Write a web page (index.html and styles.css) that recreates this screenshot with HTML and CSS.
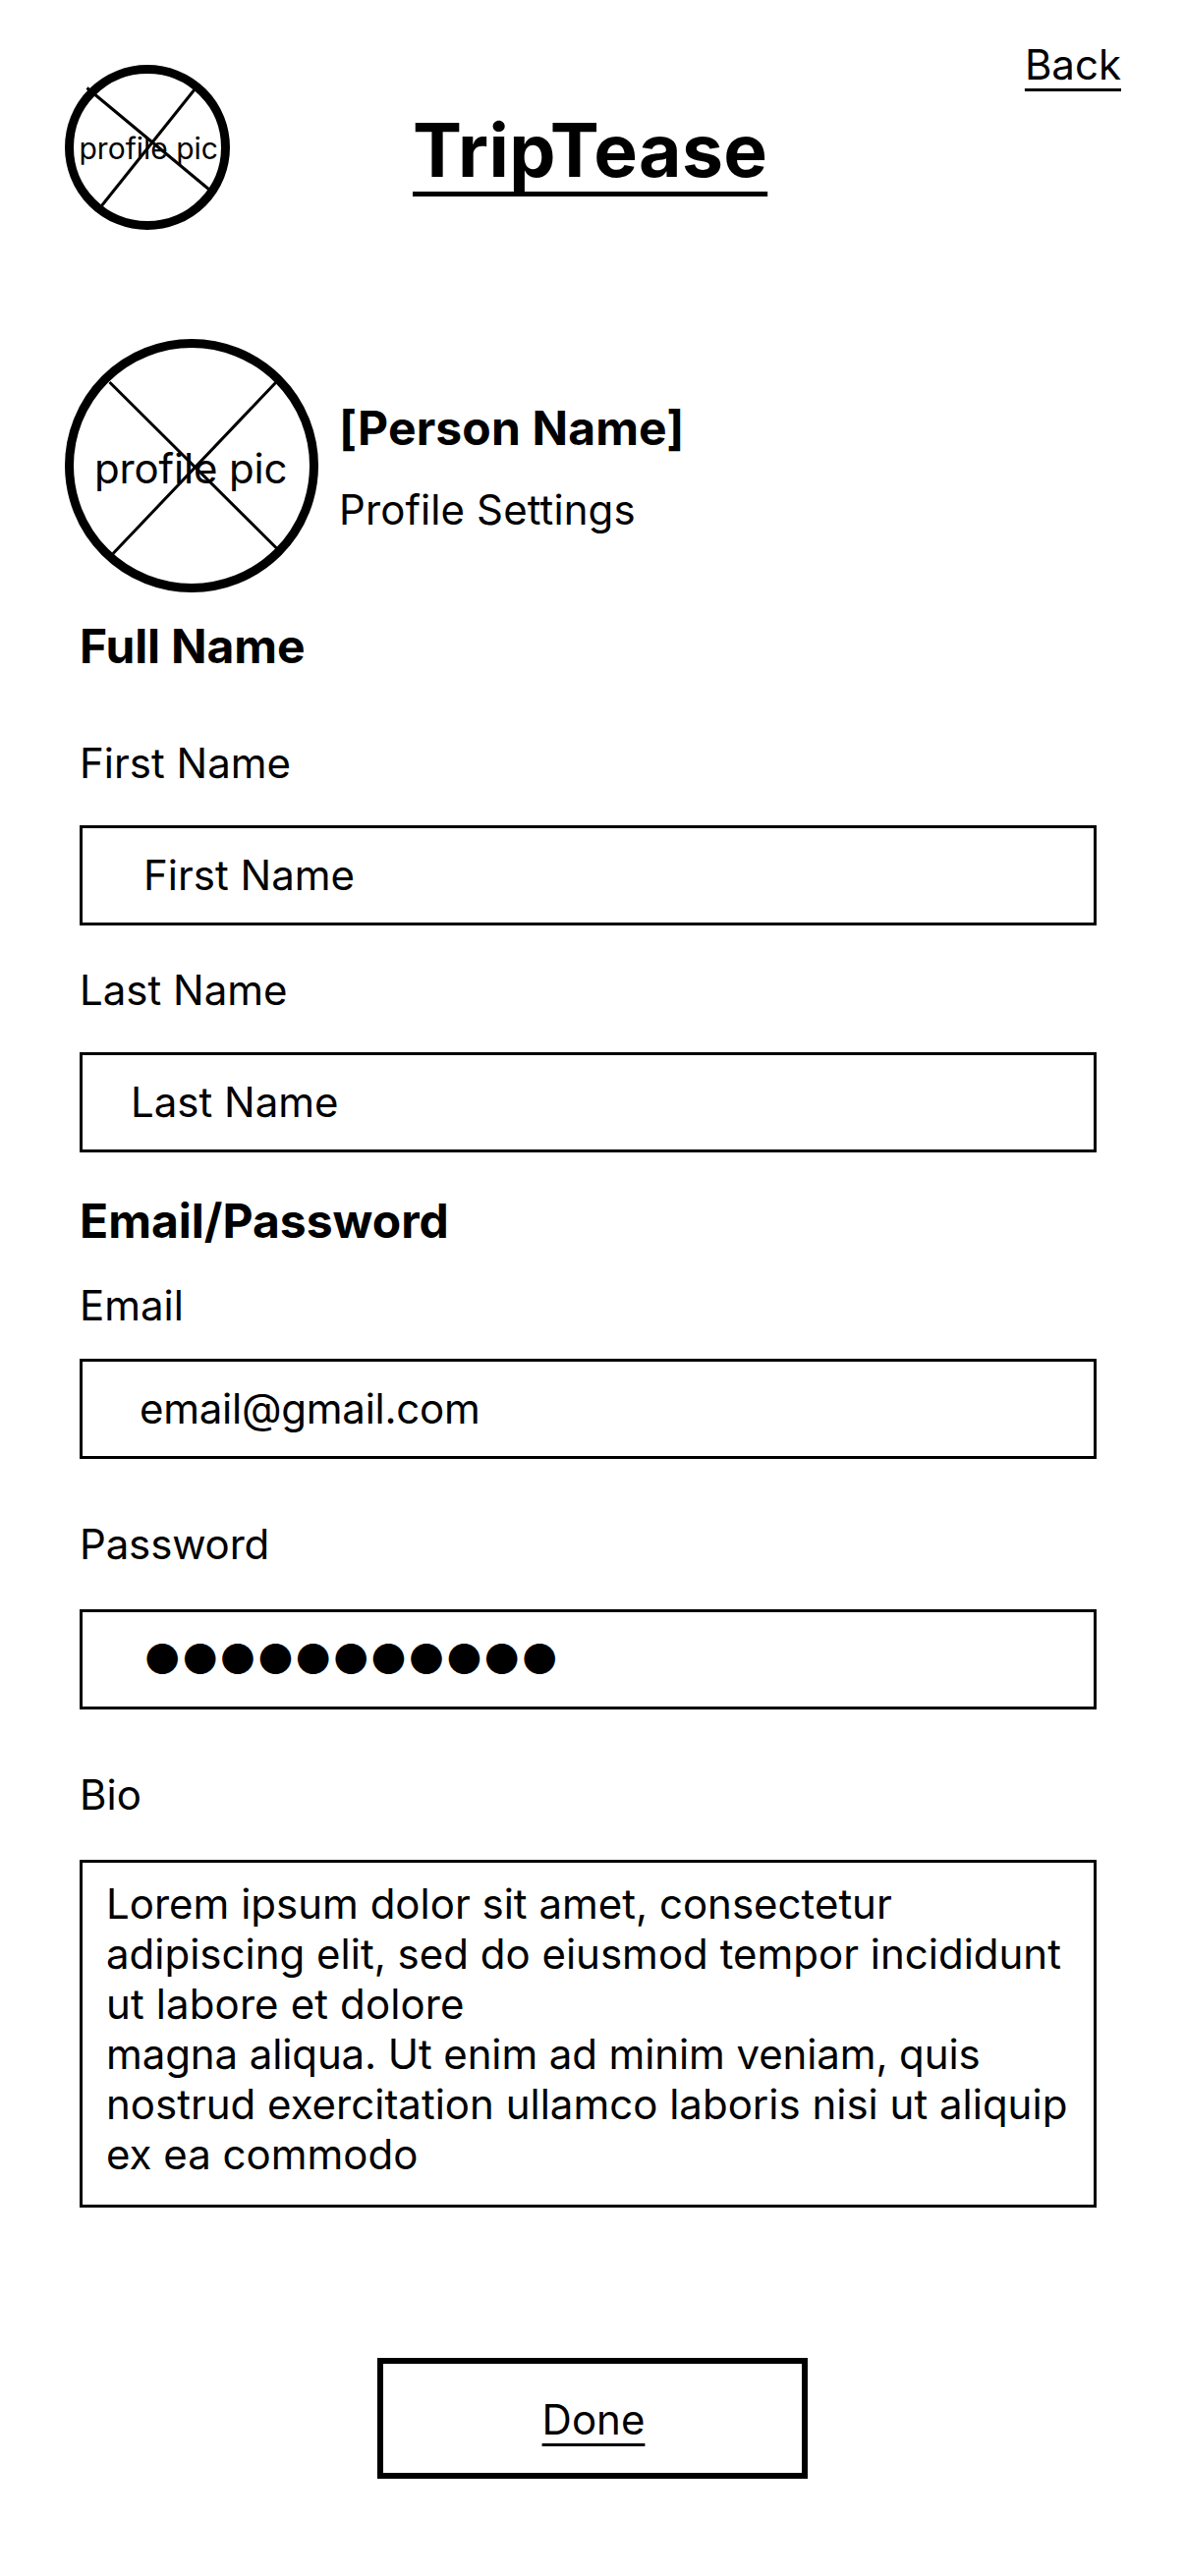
FILE: index.html
```html
<!DOCTYPE html>
<html lang="en">
<head>
<meta charset="utf-8">
<title>TripTease – Profile Settings</title>
<link rel="stylesheet" href="styles.css">
</head>
<body>
<main class="page">
  <header class="header">
    <svg class="avatar avatar-small" viewBox="0 0 168 168">
      <circle cx="84" cy="84" r="79.5"/>
      <path d="M22.5 23.5 147 127M132.5 24.5 37 144"/>
      <text x="14.5" y="95.7" font-size="30">profile pic</text>
    </svg>
    <h1 class="brand">TripTease</h1>
    <a class="back">Back</a>
  </header>

  <section class="profile">
    <svg class="avatar avatar-large" viewBox="0 0 258 258">
      <circle cx="129" cy="129" r="124.5"/>
      <path d="M45.5 44 216 213.5M215 44 49 218.5"/>
      <text x="30" y="147" font-size="42">profile pic</text>
    </svg>
    <div class="profile-text">
      <h2 class="heading person">[Person Name]</h2>
      <p class="subtitle">Profile Settings</p>
    </div>
  </section>

  <form class="form">
    <h2 class="heading name-heading">Full Name</h2>
    <div class="field first">
      <label class="label">First Name</label>
      <div class="box">First Name</div>
    </div>
    <div class="field last">
      <label class="label">Last Name</label>
      <div class="box">Last Name</div>
    </div>
    <h2 class="heading account-heading">Email/Password</h2>
    <div class="field email">
      <label class="label">Email</label>
      <div class="box">email@gmail.com</div>
    </div>
    <div class="field password">
      <label class="label">Password</label>
      <div class="box">●●●●●●●●●●●</div>
    </div>
    <div class="field bio">
      <label class="label">Bio</label>
      <div class="box">Lorem ipsum dolor sit amet, consectetur<br>adipiscing elit, sed do eiusmod tempor incididunt<br><span class="loose">ut labore et dolore</span><br><span class="tight">magna aliqua. Ut enim ad minim veniam, quis</span><br>nostrud exercitation ullamco laboris nisi ut aliquip<br>ex ea commodo</div>
    </div>
    <a class="done"><span class="done-text">Done</span></a>
  </form>
</main>
</body>
</html>
```
FILE: styles.css
```css
* { box-sizing: border-box; }

body {
  margin: 0;
  background: #fff;
  color: #000;
  font-family: Inter, "Liberation Sans", sans-serif;
  font-size: 42px;
  line-height: 51px;
}

h1, h2, p { margin: 0; }

.page {
  width: 1206px;
  height: 2622px;
  overflow: hidden;
}

.header {
  display: flex;
  align-items: flex-start;
  height: 345px;
  padding: 40px 65px 0 66px;
}

.avatar {
  display: block;
  flex: none;
  fill: none;
  stroke: #000;
  stroke-width: 3;
  overflow: visible;
}
.avatar circle { stroke-width: 9; }
.avatar text { fill: #000; stroke: none; }
.avatar-small { width: 168px; height: 168px; margin-top: 26px; }
.avatar-large { width: 258px; height: 258px; letter-spacing: -0.15px; }

.brand {
  margin: 67px 0 0 186px;
  font-size: 75px;
  line-height: 91px;
  font-weight: 700;
  letter-spacing: 0.3px;
}

.brand, .back, .done-text {
  text-decoration: underline;
  text-decoration-skip-ink: none;
  text-decoration-thickness: 3px;
  text-underline-offset: 9px;
}
.brand {
  text-decoration-thickness: 5px;
  text-underline-offset: 15px;
}

.back { margin-left: auto; }

.profile {
  display: flex;
  gap: 21px;
  height: 258px;
  padding-left: 66px;
}

.profile-text { padding-top: 62px; }

.heading {
  font-size: 48px;
  line-height: 58px;
  font-weight: 700;
}

.person { letter-spacing: 0.13px; }
.name-heading { letter-spacing: -0.15px; }

.subtitle { margin-top: 28px; letter-spacing: 0.1px; }

.form {
  display: flex;
  flex-direction: column;
  width: 1035px;
  margin-left: 81px;
  padding-top: 26px;
}

.field {
  display: flex;
  flex-direction: column;
  gap: 38px;
}

.label { display: block; }

.box {
  height: 102px;
  border: 3px solid #000;
  padding: 22px 0 0 62px;
  white-space: nowrap;
}

.first { margin-top: 64px; }
.last { margin-top: 40px; }
.last .box { padding-left: 49px; }
.account-heading { margin-top: 41px; }
.email { gap: 29px; margin-top: 31px; }
.email .box { padding-left: 58px; letter-spacing: -0.25px; }
.password { gap: 41px; margin-top: 61px; }
.password .label { letter-spacing: -0.15px; }
.bio { gap: 41px; margin-top: 61px; }
.bio .box { height: 354px; padding: 16px 0 0 24px; }
.loose { letter-spacing: 0.12px; }
.tight { letter-spacing: -0.11px; }

.done {
  display: flex;
  align-items: center;
  justify-content: center;
  width: 438px;
  height: 123px;
  margin: 153px 0 0 303px;
  padding: 1px 0 0 2px;
  border: 6px solid #000;
}
```
